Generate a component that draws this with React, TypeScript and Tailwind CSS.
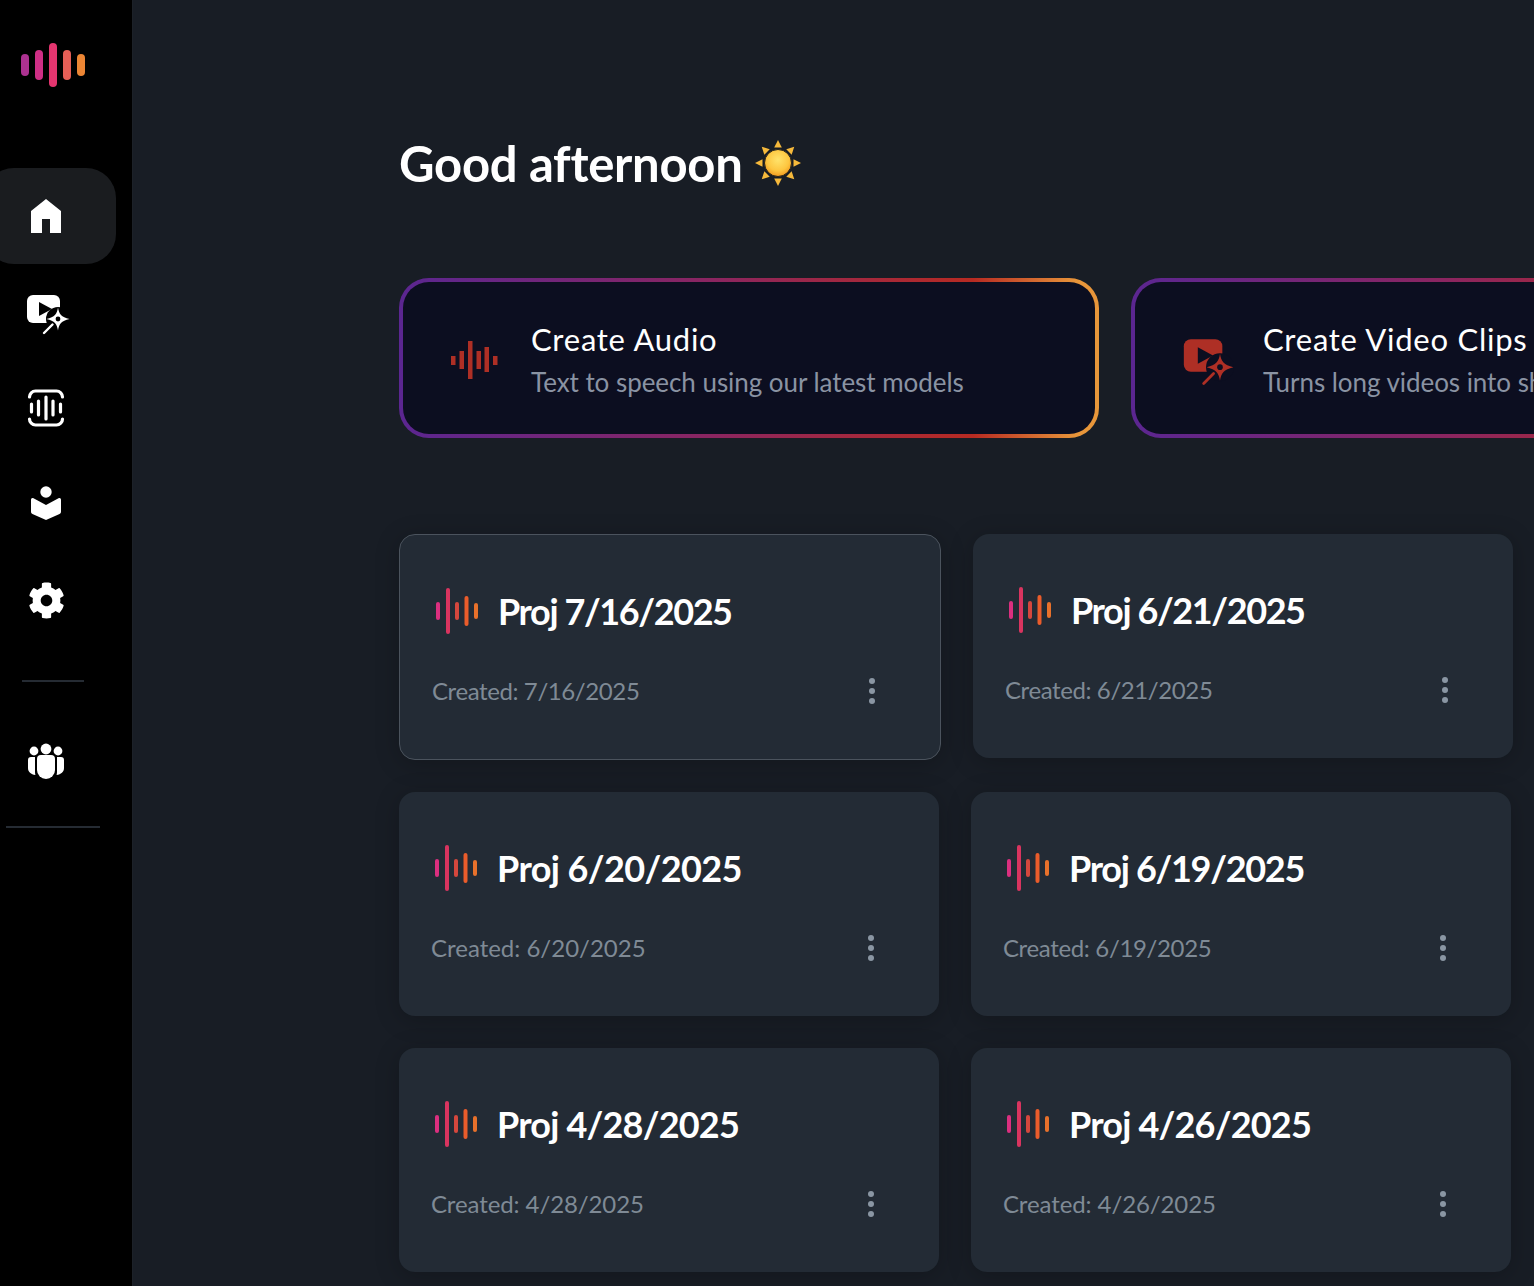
import React from 'react';
import { FaCog } from 'react-icons/fa';

const font = { fontFamily: 'Lato, "Open Sans", sans-serif' };

const HomeIcon = () => (
  <svg width="48" height="48" viewBox="0 0 48 48" fill="white">
    <path d="M24 7 39 19v22H28V27h-8v14H9V19Z" />
  </svg>
);

const ClipIcon: React.FC<{ color: string; bg: string; size?: number }> = ({ color, bg, size = 48 }) => (
  <svg width={size} height={size} viewBox="0 0 48 48" fill={color}>
    <rect x="5" y="7" width="33" height="28" rx="6" />
    <path d="M17 14v14l13-7Z" fill={bg} />
    <circle cx="36" cy="31" r="12" fill={bg} />
    <path d="M36 19.500c1 6.500 3.200 9.500 11.500 11.500-8.300 2-10.500 5-11.500 11.500-1-6.500-3.200-9.500-11.500-11.500 8.300-2 10.500-5 11.500-11.500Z" />
    <circle cx="36" cy="31" r="2.400" fill={bg} />
    <path d="M22 45 30.500 36.500" stroke={color} strokeWidth="2.400" strokeLinecap="round" />
  </svg>
);

const TranscriptIcon = () => (
  <svg width="48" height="48" viewBox="0 0 48 48" fill="none" stroke="white" strokeLinecap="round">
    <path d="M7.500 13a6 6 0 0 1 6-6h21a6 6 0 0 1 6 6M7.500 35a6 6 0 0 0 6 6h21a6 6 0 0 0 6-6" strokeWidth="3.200" />
    <path d="M9.500 20v8M16.500 17v14M24 13v22M31 17v14M38.500 20v8" strokeWidth="3.200" />
  </svg>
);

const LearnIcon = () => (
  <svg width="48" height="48" viewBox="0 0 48 48" fill="white">
    <circle cx="24" cy="12" r="5.700" />
    <path d="M9 20c0-1.500 1-2.300 2.500-1.700L24 25l12.500-6.700c1.500-.6 2.500.2 2.500 1.700v11.500c0 1.500-.6 2.200-2 2.800L24 40l-13-5.700c-1.400-.6-2-1.300-2-2.800Z" />
  </svg>
);

const TeamIcon = () => (
  <svg width="48" height="48" viewBox="0 0 48 48" fill="white">
    <circle cx="24" cy="11" r="5.400" />
    <circle cx="12" cy="13" r="4.400" />
    <circle cx="36" cy="13" r="4.400" />
    <path d="M15 21a4 4 0 0 1 4-4h10a4 4 0 0 1 4 4v11a9 9 0 0 1-18 0Z" />
    <path d="M6 22a3 3 0 0 1 3-3h4v15c0 1 .2 2 .4 3C9 36.500 6 34 6 30Z" />
    <path d="M42 22a3 3 0 0 0-3-3h-4v15c0 1-.2 2-.4 3 4.400-.5 7.400-3 7.400-7Z" />
  </svg>
);

const SunIcon = () => (
  <svg width="46" height="46" viewBox="0 0 46 46">
    <defs>
      <radialGradient id="sunFill" cx="50%" cy="38%" r="62%">
        <stop offset="0%" stopColor="#ffe36b" />
        <stop offset="65%" stopColor="#fdc640" />
        <stop offset="100%" stopColor="#f29a1f" />
      </radialGradient>
    </defs>
    {[0, 45, 90, 135, 180, 225, 270, 315].map((deg) => (
      <path key={deg} d="M23 0 26.800 7.500H19.200Z" fill="#f6b93b" transform={`rotate(${deg} 23 23)`} />
    ))}
    <circle cx="23" cy="23" r="13.500" fill="url(#sunFill)" stroke="#2a2418" strokeWidth="1" />
  </svg>
);

const Logo = () => (
  <svg width="66" height="46" viewBox="0 0 66 46">
    <rect x="1" y="11" width="8" height="22" rx="4" fill="#ad3291" />
    <rect x="15" y="7" width="8" height="30" rx="4" fill="#cf2f86" />
    <rect x="29" y="0" width="8" height="44" rx="4" fill="#e4356f" />
    <rect x="43" y="7" width="8" height="30" rx="4" fill="#e55f57" />
    <rect x="57" y="11" width="8" height="22" rx="4" fill="#ec8534" />
  </svg>
);

const CardWave = () => (
  <svg width="46" height="46" viewBox="0 0 46 46" className="shrink-0">
    <rect x="4" y="14" width="4" height="18" rx="2" fill="#db2f7f" />
    <rect x="14" y="0" width="4" height="46" rx="2" fill="#d9345f" />
    <rect x="23" y="14" width="4" height="18" rx="2" fill="#d5473d" />
    <rect x="32.500" y="8" width="4" height="30" rx="2" fill="#ea5c2b" />
    <rect x="42" y="15" width="4" height="16" rx="2" fill="#e8712b" />
  </svg>
);

const BannerWave = () => (
  <svg width="48" height="40" viewBox="0 0 48 40" fill="#ae2f25" className="shrink-0">
    <rect x="0" y="15" width="4.500" height="9" />
    <rect x="8.500" y="10" width="4.500" height="18" />
    <rect x="17" y="0" width="4.500" height="38" />
    <rect x="25.500" y="10" width="4.500" height="18" />
    <rect x="33.500" y="6" width="4.500" height="25" />
    <rect x="42" y="15" width="4.500" height="9" />
  </svg>
);

const NavItem: React.FC<{ active?: boolean; children: React.ReactNode }> = ({ active, children }) => (
  <div className={`-ml-4 flex h-24 w-[132px] items-center rounded-[30px] pl-[38px] ${active ? 'bg-[#1a1c1f]' : ''}`}>
    {children}
  </div>
);

const Banner: React.FC<{ title: string; text: string; icon: React.ReactNode }> = ({ title, text, icon }) => (
  <div className="h-40 w-[700px] shrink-0 rounded-[30px] bg-[linear-gradient(90deg,#5b2691_0%,#8b2560_45%,#b72a22_82%,#e8963a_97%)] p-1">
    <div className="flex h-full items-center rounded-[26px] bg-[#0c0e20] pl-[46px]">
      <div className="flex w-[82px] shrink-0 items-center">{icon}</div>
      <div className="min-w-0 whitespace-nowrap pt-[2px]">
        <div className="text-[31px] leading-[40px] tracking-[0.75px] text-white">{title}</div>
        <div className="mt-[5px] text-[26px] leading-[36px] tracking-[-0.05px] text-[#8a93a3]">{text}</div>
      </div>
    </div>
  </div>
);

interface Project {
  name: string;
  created: string;
  highlight?: boolean;
  nameTracking: string;
  dateTracking: string;
}

const ProjectCard: React.FC<Project> = ({ name, created, highlight, nameTracking, dateTracking }) => (
  <div
    className={`box-content flex h-56 w-[476px] flex-col rounded-2xl bg-[#232b35] px-8 shadow-[0_4px_24px_rgba(0,0,0,0.22)] ${
      highlight ? 'border border-[#4b535d]' : ''
    }`}
  >
    <div className="mt-[53px] flex h-[46px] items-center gap-5">
      <CardWave />
      <span className={`whitespace-nowrap text-[36px] font-bold leading-[46px] text-white ${nameTracking}`}>{name}</span>
    </div>
    <div className="mt-[41px] flex h-8 items-center justify-between">
      <span className={`whitespace-nowrap text-[24px] leading-8 text-[#7f8a95] ${dateTracking}`}>Created: {created}</span>
      <span className="mr-[33px] flex flex-col gap-1">
        <i className="block h-[6px] w-[6px] rounded-full bg-[#8a96a3]" />
        <i className="block h-[6px] w-[6px] rounded-full bg-[#8a96a3]" />
        <i className="block h-[6px] w-[6px] rounded-full bg-[#8a96a3]" />
      </span>
    </div>
  </div>
);

const projects: Project[] = [
  { name: 'Proj 7/16/2025', created: '7/16/2025', highlight: true, nameTracking: 'tracking-[-1.4px]', dateTracking: 'tracking-[-0.4px]' },
  { name: 'Proj 6/21/2025', created: '6/21/2025', nameTracking: 'tracking-[-1.4px]', dateTracking: 'tracking-[-0.4px]' },
  { name: 'Proj 6/20/2025', created: '6/20/2025', nameTracking: 'tracking-[-0.6px]', dateTracking: 'tracking-[0px]' },
  { name: 'Proj 6/19/2025', created: '6/19/2025', nameTracking: 'tracking-[-1.3px]', dateTracking: 'tracking-[-0.35px]' },
  { name: 'Proj 4/28/2025', created: '4/28/2025', nameTracking: 'tracking-[-0.8px]', dateTracking: 'tracking-[-0.1px]' },
  { name: 'Proj 4/26/2025', created: '4/26/2025', nameTracking: 'tracking-[-0.8px]', dateTracking: 'tracking-[-0.1px]' },
];

export default function App() {
  return (
    <div className="flex h-screen overflow-hidden bg-[#181d25]" style={font}>
      <aside className="w-[133px] shrink-0 border-r border-[#1c2128] bg-black">
        <div className="h-[168px] pl-5 pt-[43px]">
          <Logo />
        </div>
        <NavItem active>
          <HomeIcon />
        </NavItem>
        <NavItem>
          <ClipIcon color="white" bg="black" />
        </NavItem>
        <NavItem>
          <TranscriptIcon />
        </NavItem>
        <NavItem>
          <LearnIcon />
        </NavItem>
        <NavItem>
          <div className="flex h-12 w-12 items-center justify-center text-white">
            <FaCog size={37} />
          </div>
        </NavItem>
        <div className="ml-[22px] mt-[32px] h-0.5 w-[62px] bg-[#252b33]" />
        <div className="mt-8">
          <NavItem>
            <TeamIcon />
          </NavItem>
        </div>
        <div className="ml-[6px] mt-4 h-0.5 w-[94px] bg-[#252b33]" />
      </aside>
      <main className="min-w-0 flex-1 overflow-hidden pl-[266px] pt-[135px]">
        <div className="flex h-14 items-center">
          <h1 className="whitespace-nowrap text-[49px] font-bold leading-[56px] tracking-[-0.27px] text-white">Good afternoon</h1>
          <div className="ml-3">
            <SunIcon />
          </div>
        </div>
        <div className="mt-[87px] flex gap-8">
          <Banner
            title="Create Audio"
            text="Text to speech using our latest models"
            icon={
              <div className="ml-[2px] mt-[5px]">
                <BannerWave />
              </div>
            }
          />
          <Banner
            title="Create Video Clips"
            text="Turns long videos into short clips"
            icon={
              <div className="-ml-[3px] mt-[1px]">
                <ClipIcon color="#ae2f25" bg="#0c0e20" size={56} />
              </div>
            }
          />
        </div>
        <div className="mt-24 flex w-[1116px] flex-wrap gap-8">
          {projects.map((p) => (
            <ProjectCard key={p.name} {...p} />
          ))}
        </div>
      </main>
    </div>
  );
}
